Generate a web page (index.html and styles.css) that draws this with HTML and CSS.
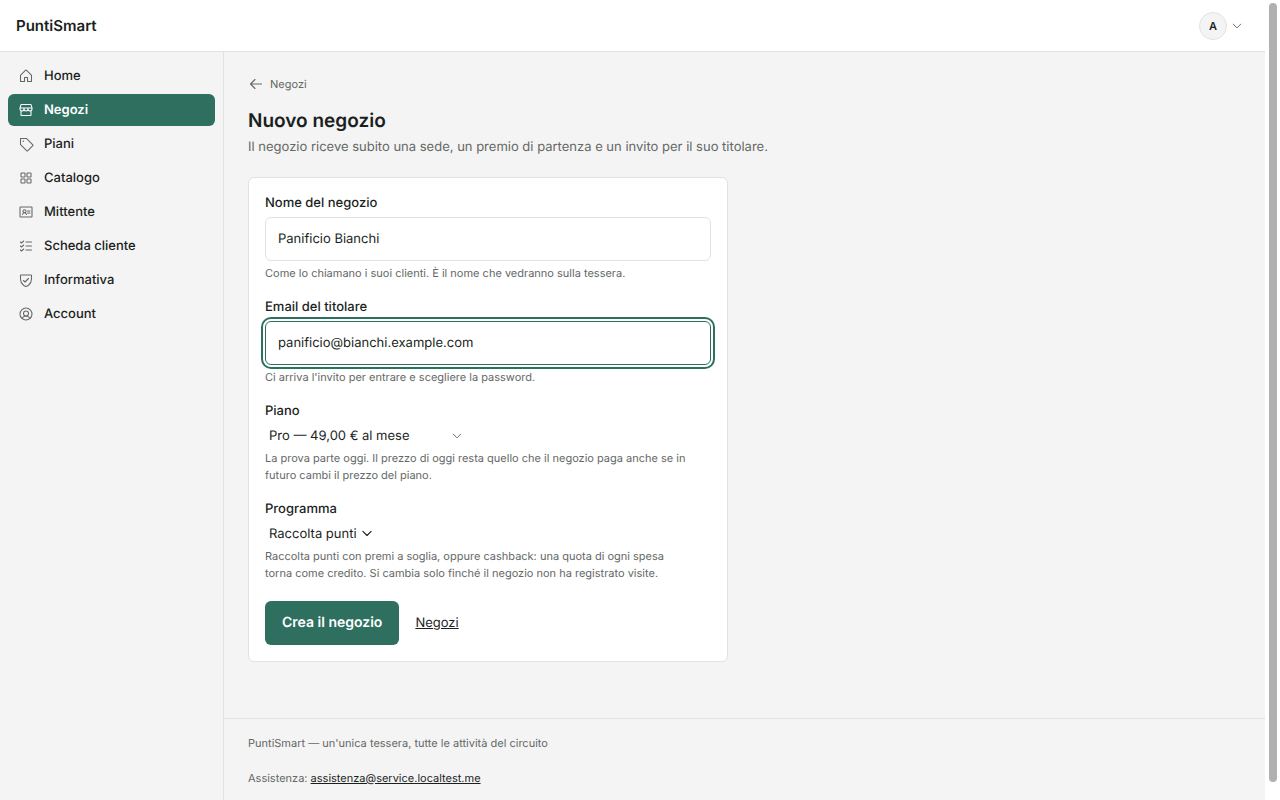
FILE: index.html
```html
<!DOCTYPE html>
<html lang="it">
<head>
<meta charset="utf-8">
<meta name="viewport" content="width=device-width, initial-scale=1">
<title>Nuovo negozio — PuntiSmart</title>
<link rel="stylesheet" href="styles.css">
</head>
<body>
<div class="window">
<div class="app">
  <header class="topbar">
    <a class="brand" href="#">PuntiSmart</a>
    <button class="user-menu" type="button" aria-label="Menu utente">
      <span class="avatar">A</span>
      <svg class="icon icon-small" viewBox="0 0 256 256"><path d="M208 88l-80 80-80-80"/></svg>
    </button>
  </header>
  <div class="body">
    <nav class="sidebar">
      <a class="nav-item" href="#"><svg class="icon" viewBox="0 0 256 256"><path d="M104 216v-64h48v64h64v-96a8 8 0 0 0-2.34-5.66l-80-80a8 8 0 0 0-11.32 0l-80 80A8 8 0 0 0 40 120v96Z"/></svg>Home</a>
      <a class="nav-item active" href="#" aria-current="page"><svg class="icon" viewBox="0 0 256 256"><path d="M48 139.6V208a8 8 0 0 0 8 8h144a8 8 0 0 0 8-8v-68.4M54 40h148a8 8 0 0 1 7.7 5.8L224 96H32l14.3-50.2A8 8 0 0 1 54 40ZM96 96v16a32 32 0 0 1-64 0V96M160 96v16a32 32 0 0 1-64 0V96M224 96v16a32 32 0 0 1-64 0V96"/></svg>Negozi</a>
      <a class="nav-item" href="#"><svg class="icon" viewBox="0 0 256 256"><path d="M42.3 138.3A8 8 0 0 1 40 132.7V40h92.7a8 8 0 0 1 5.6 2.3l99.4 99.4a8 8 0 0 1 0 11.3L153 237.7a8 8 0 0 1-11.3 0Z"/><circle class="dot" cx="84" cy="84" r="12"/></svg>Piani</a>
      <a class="nav-item" href="#"><svg class="icon" viewBox="0 0 256 256"><rect x="48" y="48" width="64" height="64" rx="8"/><rect x="144" y="48" width="64" height="64" rx="8"/><rect x="48" y="144" width="64" height="64" rx="8"/><rect x="144" y="144" width="64" height="64" rx="8"/></svg>Catalogo</a>
      <a class="nav-item" href="#"><svg class="icon" viewBox="0 0 256 256"><rect x="32" y="48" width="192" height="160" rx="8"/><circle cx="104" cy="116" r="24"/><path d="M72 168c4-18 17-28 32-28s28 10 32 28M152 112h40M152 144h40"/></svg>Mittente</a>
      <a class="nav-item" href="#"><svg class="icon" viewBox="0 0 256 256"><path d="M128 128h88M128 64h88M128 192h88M92 48L56 80 40 64M92 112l-36 32-16-16M92 176l-36 32-16-16"/></svg>Scheda cliente</a>
      <a class="nav-item" href="#"><svg class="icon" viewBox="0 0 256 256"><path d="M216 112V56a8 8 0 0 0-8-8H48a8 8 0 0 0-8 8v56c0 96 88 120 88 120s88-24 88-120ZM88 136l24 24 56-56"/></svg>Informativa</a>
      <a class="nav-item" href="#"><svg class="icon" viewBox="0 0 256 256"><circle cx="128" cy="128" r="96"/><circle cx="128" cy="120" r="40"/><path d="M63.8 199.4a72 72 0 0 1 128.4 0"/></svg>Account</a>
    </nav>
    <div class="content">
      <main class="main">
        <a class="back" href="#"><svg class="icon" viewBox="0 0 256 256"><path d="M216 128H40M112 56l-72 72 72 72"/></svg>Negozi</a>
        <h1 class="title">Nuovo negozio</h1>
        <p class="subtitle">Il negozio riceve subito una sede, un premio di partenza e un invito per il suo titolare.</p>
        <form class="card">
          <div class="field">
            <label class="label" for="nome">Nome del negozio</label>
            <input class="input" id="nome" type="text" value="Panificio Bianchi">
            <p class="hint">Come lo chiamano i suoi clienti. È il nome che vedranno sulla tessera.</p>
          </div>
          <div class="field">
            <label class="label" for="email">Email del titolare</label>
            <input class="input focused" id="email" type="email" value="panificio@bianchi.example.com">
            <p class="hint">Ci arriva l'invito per entrare e scegliere la password.</p>
          </div>
          <div class="field">
            <label class="label" for="piano">Piano</label>
            <span class="select-wrap wide">
              <select class="select" id="piano"><option>Pro — 49,00 € al mese</option></select>
              <svg class="icon icon-small" viewBox="0 0 256 256"><path d="M208 88l-80 80-80-80"/></svg>
            </span>
            <p class="hint">La prova parte oggi. Il prezzo di oggi resta quello che il negozio paga anche se in futuro cambi il prezzo del piano.</p>
          </div>
          <div class="field">
            <label class="label" for="programma">Programma</label>
            <span class="select-wrap">
              <select class="select" id="programma"><option>Raccolta punti</option></select>
              <svg class="icon icon-small dark" viewBox="0 0 256 256"><path d="M216 72l-88 88-88-88"/></svg>
            </span>
            <p class="hint">Raccolta punti con premi a soglia, oppure cashback: una quota di ogni spesa<br>torna come credito. Si cambia solo finché il negozio non ha registrato visite.</p>
          </div>
          <div class="actions">
            <button class="submit" type="submit">Crea il negozio</button>
            <a class="cancel" href="#">Negozi</a>
          </div>
        </form>
      </main>
      <footer class="footer">
        <p>PuntiSmart — un'unica tessera, tutte le attività del circuito</p>
        <p>Assistenza: <a href="mailto:assistenza@service.localtest.me">assistenza@service.localtest.me</a></p>
      </footer>
    </div>
  </div>
</div>
<div class="scroll-rail" aria-hidden="true"><div class="scroll-thumb"></div></div>
</div>
</body>
</html>
```
FILE: styles.css
```css
* { box-sizing: border-box; }
body {
  margin: 0;
  font-family: Inter, "Liberation Sans", sans-serif;
  font-size: 13px;
  line-height: 20px;
  color: #1b1f1d;
  background: #fff;
  text-rendering: geometricPrecision;
}
p, h1 { margin: 0; }
a { color: inherit; }
input, select, button { font: inherit; color: inherit; text-rendering: inherit; }

.window { display: flex; height: 100vh; overflow: hidden; }
.app { flex: 1; display: flex; flex-direction: column; min-width: 0; }
.scroll-rail { width: 15px; padding: 3px 3px 18px 4px; background: #fff; }
.scroll-thumb { height: 100%; border-radius: 4px; background: #b1afb0; }

.topbar {
  display: flex;
  align-items: center;
  justify-content: space-between;
  flex: none;
  height: 52px;
  padding: 0 22px 0 16px;
  background: #fff;
  border-bottom: 1px solid #e2e2e2;
}
.brand { font-size: 15px; font-weight: 600; text-decoration: none; }
.user-menu {
  display: flex;
  align-items: center;
  gap: 4px;
  padding: 0;
  border: 0;
  background: none;
}
.avatar {
  display: grid;
  place-items: center;
  width: 28px;
  height: 28px;
  border: 1px solid #e2e2e2;
  border-radius: 50%;
  background: #f4f4f4;
  font-size: 11px;
  font-weight: 600;
}

.icon {
  flex: none;
  width: 16px;
  height: 16px;
  fill: none;
  stroke: #646866;
  stroke-width: 17;
  stroke-linecap: round;
  stroke-linejoin: round;
}
.icon-small { width: 12px; height: 12px; stroke-width: 20; }
.icon.dark { stroke: #1b1f1d; stroke-width: 24; }
.icon .dot { fill: #646866; stroke: none; }

.body { display: flex; flex: 1; background: #f4f4f4; }
.sidebar {
  display: flex;
  flex-direction: column;
  gap: 2px;
  width: 224px;
  padding: 8px;
  border-right: 1px solid #e2e2e2;
}
.nav-item {
  display: flex;
  align-items: center;
  gap: 10px;
  height: 32px;
  padding: 0 10px;
  border-radius: 6px;
  font-weight: 500;
  line-height: 21px;
  text-decoration: none;
}
.nav-item.active { background: #2e6f60; color: #fff; font-weight: 600; }
.nav-item.active .icon { stroke: #fff; }

.content { flex: 1; display: flex; flex-direction: column; min-width: 0; }
.main { padding: 24px 24px 56px; }
.back {
  display: inline-flex;
  align-items: center;
  gap: 6px;
  height: 16px;
  font-size: 11px;
  color: #646866;
  text-decoration: none;
}
.title { margin-top: 8px; font-size: 19px; line-height: 29px; font-weight: 600; }
.subtitle { margin-top: 2px; color: #646866; }

.card {
  display: flex;
  flex-direction: column;
  gap: 16px;
  max-width: 480px;
  margin-top: 20px;
  padding: 16px;
  border: 1px solid #e2e2e2;
  border-radius: 6px;
  background: #fff;
}
.field { display: flex; flex-direction: column; align-items: flex-start; gap: 4px; }
.label { line-height: 19px; font-weight: 500; }
.input {
  width: 100%;
  height: 44px;
  padding: 0 12px;
  border: 1px solid #e2e2e2;
  border-radius: 6px;
  background: #fff;
  outline: none;
}
.input.focused {
  border-color: #2e6f60;
  outline: 2px solid #2e6f60;
  outline-offset: 2px;
}
.hint { font-size: 11px; line-height: 17px; color: #646866; }
.select-wrap { display: grid; align-items: center; }
.select-wrap.wide { width: 198px; }
.select {
  grid-area: 1 / 1;
  width: 100%;
  height: 21px;
  padding: 0 16px 0 4px;
  border: 0;
  appearance: none;
  background: none;
}
.select-wrap .icon { grid-area: 1 / 1; justify-self: end; pointer-events: none; }

.actions { display: flex; align-items: center; gap: 16px; padding-top: 3px; }
.submit {
  height: 44px;
  padding: 0 17px;
  border: 0;
  border-radius: 6px;
  background: #2e6f60;
  color: #fff;
  font-size: 14px;
  font-weight: 600;
}

.footer {
  display: flex;
  flex-direction: column;
  flex: 1;
  gap: 18px;
  padding: 16px 24px;
  border-top: 1px solid #e2e2e2;
  font-size: 11px;
  line-height: 17px;
  color: #646866;
}
.footer a { color: #1b1f1d; }
```
